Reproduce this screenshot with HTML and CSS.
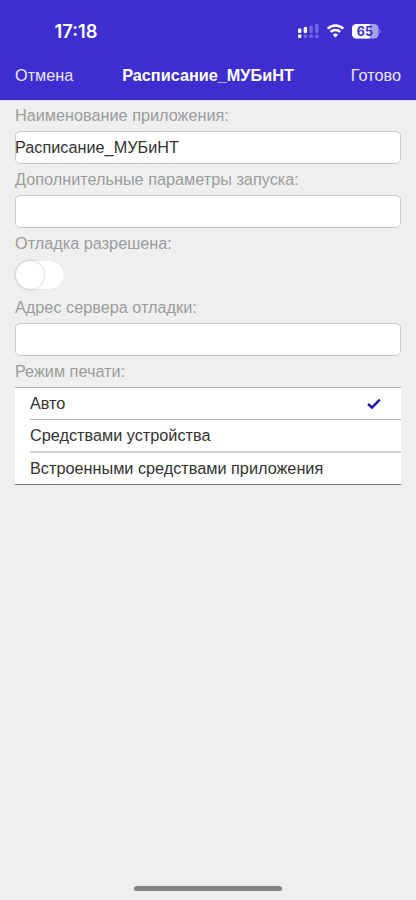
FILE: index.html
```
<!DOCTYPE html>
<html lang="ru">
<head>
<meta charset="utf-8">
<meta name="viewport" content="width=device-width">
<title>Расписание_МУБиНТ</title>
<link rel="stylesheet" href="styles.css">
</head>
<body>
<header class="header">
  <div class="status">
    <span class="clock">17:18</span>
    <svg class="indicators" width="84" height="18" viewBox="0 0 84 18">
      <g fill="#fff">
        <rect x="1" y="6.5" width="3.4" height="4.5" rx="1"/>
        <rect x="6.7" y="5" width="3.4" height="6" rx="1"/>
        <rect x="1" y="12.5" width="3.4" height="3.6" rx="1"/>
        <g opacity=".27">
          <rect x="12.4" y="3.5" width="3.4" height="7.5" rx="1"/>
          <rect x="18.1" y="1.7" width="3.4" height="9.3" rx="1"/>
          <rect x="6.7" y="12.5" width="3.4" height="3.6" rx="1"/>
          <rect x="12.4" y="12.5" width="3.4" height="3.6" rx="1"/>
          <rect x="18.1" y="12.5" width="3.4" height="3.6" rx="1"/>
        </g>
      </g>
      <g fill="none" stroke="#fff" stroke-width="2.5">
        <path d="M30.7 6.7a11.2 11.2 0 0 1 15.6 0"/>
        <path d="M33.7 9.9a6.9 6.9 0 0 1 9.6 0"/>
      </g>
      <path fill="#fff" d="M35.8 12.7a3.9 3.9 0 0 1 5.4 0L38.5 15.6z"/>
      <clipPath id="charge"><rect x="55" y="1" width="17.6" height="16"/></clipPath>
      <rect x="55" y="2" width="26.6" height="14.6" rx="4.6" fill="#a59ee8"/>
      <rect x="55" y="2" width="26.6" height="14.6" rx="4.6" fill="#fff" clip-path="url(#charge)"/>
      <path fill="#8a81df" d="M82.4 7.2c1.6.5 1.6 3.7 0 4.2z"/>
      <text class="battery" x="67.9" y="13.7" text-anchor="middle">65</text>
    </svg>
  </div>
  <nav class="nav">
    <span class="action">Отмена</span>
    <h1 class="title">Расписание_МУБиНТ</h1>
    <span class="action done">Готово</span>
  </nav>
</header>
<main class="form">
  <div class="label">Наименование приложения:</div>
  <div class="field">Расписание_МУБиНТ</div>
  <div class="label">Дополнительные параметры запуска:</div>
  <div class="field"></div>
  <div class="label">Отладка разрешена:</div>
  <div class="toggle-row"><span class="toggle"><span class="knob"></span></span></div>
  <div class="label">Адрес сервера отладки:</div>
  <div class="field"></div>
  <div class="label">Режим печати:</div>
  <ul class="options">
    <li class="option">Авто
      <svg class="check" width="14" height="12" viewBox="0 0 14 12"><path d="M1.1 6L5 9.6L12.8 1.6" fill="none" stroke="#1c10ae" stroke-width="2.5"/></svg>
    </li>
    <li class="option">Средствами устройства</li>
    <li class="option">Встроенными средствами приложения</li>
  </ul>
</main>
<footer class="home"><span class="home-bar"></span></footer>
</body>
</html>
```
FILE: styles.css
```
* { box-sizing: border-box; }
body {
  margin: 0;
  height: 900px;
  display: flex;
  flex-direction: column;
  background: #efefef;
  color: #333;
  font: 16.25px/31px "Liberation Sans", Arial, sans-serif;
  white-space: nowrap;
  overflow: hidden;
}
.header { height: 100px; background: #3e2ecf; color: #fff; box-shadow: 0 1px #dfdffa; }
.status {
  height: 59px;
  padding: 22px 35px 0 54.5px;
  display: flex;
  justify-content: space-between;
}
.clock { margin-top: -1px; font: 600 18.3px/20px Inter, sans-serif; }
.indicators { display: block; }
.battery { font: 700 12.5px Inter, sans-serif; fill: #3e2ecf; }
.nav {
  display: grid;
  grid-template-columns: 1fr auto 1fr;
  padding: 0 15px;
  line-height: 32px;
}
.action { color: #e9e6fb; }
.done { text-align: right; }
.title { margin: 0; font-size: 16.25px; font-weight: 700; }
.form { padding: 0 15px; flex: 1; }
.label { height: 31px; color: #9c9c9c; line-height: 30px; }
.field {
  height: 33px;
  border: 1px solid #c8c8c8;
  border-radius: 5px;
  background: #fff;
  text-indent: -1px;
}
.toggle-row { height: 33px; padding: 2px 1px; display: flex; align-items: flex-start; }
.toggle {
  width: 48px;
  height: 28px;
  border-radius: 15px;
  background: #fff;
  box-shadow: 0 0 1px #ccc;
}
.knob {
  display: block;
  width: 28px;
  height: 28px;
  border-radius: 50%;
  background: #fff;
  box-shadow: 0 0 3px #0004;
}
.options {
  margin: 0;
  padding: 0 0 0 15px;
  list-style: none;
  background: #fff;
  border-top: 1px solid #aaa;
  border-bottom: 1px solid #777;
}
.option {
  height: 31px;
  display: flex;
  justify-content: space-between;
  align-items: center;
}
.option + .option { height: 32px; border-top: 1px solid #b3b3b3; }
.option + .option:last-child { height: 33px; border-top: 2px solid #d4d4d4; }
.check { margin-right: 20px; }
.home { height: 17px; display: flex; justify-content: center; }
.home-bar { width: 148px; height: 5px; margin-top: 3px; border-radius: 3px; background: #838383; }
```
